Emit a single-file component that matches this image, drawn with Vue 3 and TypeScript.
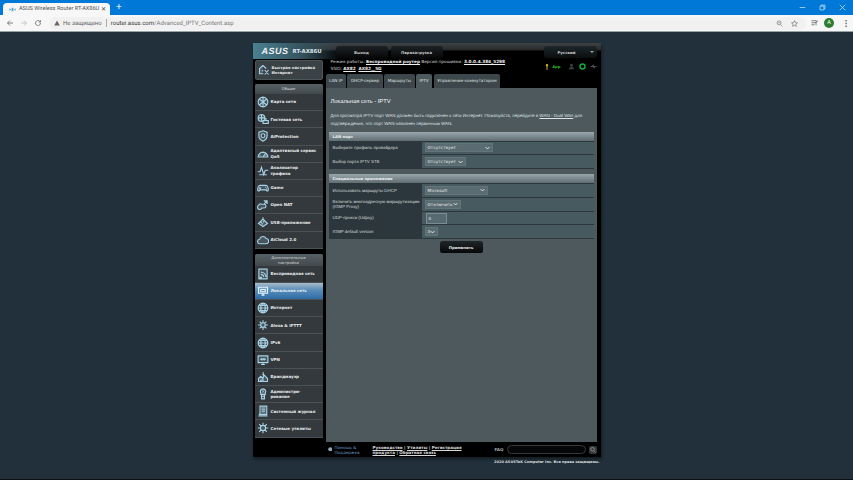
<script setup lang="ts">
interface MenuItem {
  label: string;
  icon: string;
  active?: boolean;
}

// icon paths are drawn on a 16x16 box
const globe = 'M8 1.500a6.500 6.500 0 1 0 0 13a6.500 6.500 0 1 0 0-13M1.500 8h13M8 1.500c-4 4-4 9 0 13M8 1.500c4 4 4 9 0 13M2.600 4.600h10.800M2.600 11.400h10.800';

const generalItems: MenuItem[] = [
  { label: 'Карта сети', icon: 'M8 1.500a6.500 6.500 0 1 0 0 13a6.500 6.500 0 1 0 0-13M3 4l10 8M13 4L3 12M8 1.500v13' },
  { label: 'Гостевая сеть', icon: 'M6 2a4.500 4.500 0 1 0 0 9a4.500 4.500 0 1 0 0-9M1.500 6.500h9M6 2v9M8 10h7v4H8zM10 8.500a2 2 0 0 1 3 0' },
  { label: 'AiProtection', icon: 'M8 1l5.500 2v5c0 3-2.500 5.500-5.500 7c-3-1.500-5.500-4-5.500-7V3zM8 5a2.500 2.500 0 1 0 0 5a2.500 2.500 0 1 0 0-5' },
  { label: 'Адаптивный сервис QoS', icon: 'M1.500 12a6.500 6.500 0 0 1 13 0zM8 12l3.500-5M3.500 9.500l1 .6M12.500 9.500l-1 .6M8 5.500v1.200' },
  { label: 'Анализатор\nтрафика', icon: 'M1 9h3l2-6l3 10l2-6h4M3 13h10' },
  { label: 'Game', icon: 'M4 4.500h8c2 0 3.500 4 3 6.500c-.4 1.500-2 1.500-3-.5H4c-1 2-2.600 2-3 .5c-.5-2.500 1-6.500 3-6.500zM4 7v2.500M2.800 8.200h2.400M11 7.200h.8M12.500 8.800h.8' },
  { label: 'Open NAT', icon: 'M2 8.500a3 3 0 1 0 4.500 3.500h3a2.500 2.500 0 0 0 0-5h-3a3 3 0 0 0-4.500 1.500zM9 2.500h4.500V6.500M13.500 2.500L9.500 6.500' },
  { label: 'USB-приложение', icon: 'M2 10l6-6l6 6l-6 4zM8 4V1.500M5 8l1.500 1.500M8 7l1.500 1.500M6.500 11l1.500-1' },
  { label: 'AiCloud 2.0', icon: 'M4 13a3 3 0 0 1-.5-6a4.500 4.500 0 0 1 8.500-1a3.500 3.500 0 0 1 0 7z' }
];

const advancedItems: MenuItem[] = [
  { label: 'Беспроводная сеть', icon: 'M2.500 1.500h11v13h-11zM5 12a1 1 0 1 0 .01 0M5 8.500a4 4 0 0 1 4 3.500M5 5.500a7 7 0 0 1 7 6.500' },
  { label: 'Локальная сеть', icon: 'M2 3h12v8H2zM6 13.500h4M8 11v2.500M5 6h6v3H5z', active: true },
  { label: 'Интернет', icon: globe },
  { label: 'Alexa & IFTTT', icon: 'M8 5a3 3 0 1 0 0 6a3 3 0 1 0 0-6M1.500 8h3M11.500 8h3M8 1.500v3M8 11.500v3M3.500 3.500l2.300 2.300M12.500 3.500l-2.300 2.300M3.500 12.500l2.300-2.300M12.500 12.500l-2.300-2.300' },
  { label: 'IPv6', icon: globe },
  { label: 'VPN', icon: 'M1.500 2.500h13v9h-13zM5.500 14h5M8 11.500V14M4 7h3M9 7h3M6 5.500L7.500 7L6 8.500M10 5.500L8.500 7L10 8.500' },
  { label: 'Брандмауэр', icon: 'M2 14v-4l3-3l3 3l1-5l5 5v4zM8 1.500c1 2 0 3-.5 4M5 14v-2h3v2' },
  { label: 'Администри-\nрование', icon: 'M5 6.500a3.500 3.500 0 1 1 6 0v2H5zM6 8.500v6h4v-6M6.500 11h3M8 3v3' },
  { label: 'Системный журнал', icon: 'M4 1.500h9v11H4zM6 4h5M6 6.500h5M6 9h5M2 14.500h12M2.500 12.500h2' },
  { label: 'Сетевые утилиты', icon: 'M8 4.500a3.500 3.500 0 1 0 0 7a3.500 3.500 0 1 0 0-7M8 1v3M8 12v3M1 8h3M12 8h3M3 3l2.500 2.500M13 3l-2.500 2.500M3 13l2.500-2.500M13 13l-2.500-2.500' }
];

interface Row {
  label: string;
  kind: 'select' | 'input';
  value: string;
  width?: number;
}

const lanRows: Row[] = [
  { label: 'Выберите профиль провайдера', kind: 'select', value: 'Отсутствует', width: 68 },
  { label: 'Выбор порта IPTV STB', kind: 'select', value: 'Отсутствует', width: 41 }
];

const specialRows: Row[] = [
  { label: 'Использовать маршруты DHCP', kind: 'select', value: 'Microsoft', width: 63 },
  { label: 'Включить многоадресную маршрутизацию (IGMP Proxy)', kind: 'select', value: 'Отключить', width: 36 },
  { label: 'UDP-прокси (Udpxy)', kind: 'input', value: '0' },
  { label: 'IGMP default version', kind: 'select', value: '3', width: 13 }
];

const tabs = ['LAN IP', 'DHCP-сервер', 'Маршруты', 'IPTV', 'Управление коммутатором'];
</script>

<template>
  <div class="page">
    <div class="tabbar">
      <div class="tab">
        <svg class="favicon" viewBox="0 0 16 16"><path d="M1 5l4 3l-4 3zM15 5l-4 3l4 3zM6 4h4v8H6z" fill="#4fa3c7" /></svg>
        <span class="tab-title">ASUS Wireless Router RT-AX86U</span>
        <span class="tab-close">✕</span>
      </div>
      <span class="new-tab">+</span>
      <div class="win-buttons">
        <svg viewBox="0 0 10 10"><path d="M1 5h8" /></svg>
        <svg viewBox="0 0 10 10"><path d="M1.500 3h5.500v5.500H1.500zM3 3V1.500h5.500V7H7" /></svg>
        <svg viewBox="0 0 10 10"><path d="M1 1l8 8M9 1l-8 8" /></svg>
      </div>
    </div>

    <div class="toolbar">
      <svg class="nav dark" viewBox="0 0 16 16"><path d="M14 8H3M8 3L3 8l5 5" /></svg>
      <svg class="nav light" viewBox="0 0 16 16"><path d="M2 8h11M8 3l5 5l-5 5" /></svg>
      <svg class="nav dark" viewBox="0 0 16 16"><path d="M13 8a5 5 0 1 1-1.500-3.500L13 6V2.500M13 6H9.500" /></svg>
      <div class="omnibox">
        <svg class="warn" viewBox="0 0 16 16"><path d="M8 1.500L15.500 14.500H.5z" /></svg>
        <span class="insecure">Не защищено</span>
        <span class="omni-sep"></span>
        <span class="url"><b>router.asus.com</b>/Advanced_IPTV_Content.asp</span>
        <span class="omni-spacer"></span>
        <svg class="omni-icon" viewBox="0 0 16 16"><path d="M7 2a4.500 4.500 0 1 0 0 9a4.500 4.500 0 1 0 0-9M10.500 10.500L14.500 14.500M5 6.500h4" /></svg>
        <svg class="omni-icon" viewBox="0 0 16 16"><path d="M8 1.500l2 4.500l4.800.5l-3.600 3.200l1 4.800L8 12l-4.200 2.500l1-4.800L1.200 6.500L6 6z" /></svg>
      </div>
      <svg class="nav dark queue" viewBox="0 0 16 16"><path d="M1 3.500h10M1 7.500h10M1 11.500h6M10 12.500V5.500l4-1.500" /></svg>
      <span class="avatar">A</span>
      <span class="dots">⋮</span>
    </div>

    <div class="content">
      <div class="router">
        <header class="router-head">
          <span class="logo">ASUS</span>
          <span class="model">RT-AX86U</span>
          <button class="head-btn">Выход</button>
          <button class="head-btn">Перезагрузка</button>
          <span class="head-spacer"></span>
          <button class="lang-btn">Русский<i class="lang-arrow"></i></button>
        </header>

        <div class="router-body">
          <aside class="sidebar">
            <div class="quick">
              <svg viewBox="0 0 16 16" class="menu-icon"><path d="M6.500 2L2 6v7h5M6.500 2L11 6M9 8l5 6M14 8l-5 6M5 9h2" /></svg>
              <span>Быстрая настройка<br />Интернет</span>
            </div>

            <div class="menu-group first">
              <div class="menu-title">Общие</div>
              <div v-for="item in generalItems" :key="item.label" class="menu-item">
                <svg viewBox="0 0 16 16" class="menu-icon"><path :d="item.icon" /></svg>
                <span>{{ item.label }}</span>
              </div>
            </div>

            <div class="menu-group">
              <div class="menu-title two-line">Дополнительные<br />настройки</div>
              <div
                v-for="item in advancedItems"
                :key="item.label"
                class="menu-item"
                :class="{ active: item.active }"
              >
                <svg viewBox="0 0 16 16" class="menu-icon"><path :d="item.icon" /></svg>
                <span>{{ item.label }}</span>
              </div>
            </div>
          </aside>

          <main class="main">
            <div class="status">
              <div class="status-text">
                <div>Режим работы: <u>Беспроводной роутер</u> Версия прошивки: <u>3.0.0.4.384_5298</u></div>
                <div>SSID: <u>AX82</u> &nbsp;<u>AX82__5G</u></div>
              </div>
              <div class="status-icons">
                <svg viewBox="0 0 8 14" class="key"><path d="M4 1a2.500 2.500 0 1 0 0 5a2.500 2.500 0 1 0 0-5M3 6h2v7H3z" /></svg>
                <span class="app">App</span>
                <svg viewBox="0 0 14 14" class="st-grey"><path d="M7 1.500a3 3 0 1 0 0 6a3 3 0 1 0 0-6M1.500 12.500c0-6 11-6 11 0z" /></svg>
                <svg viewBox="0 0 14 14" class="st-green"><path d="M7 2a5 5 0 1 0 0 10a5 5 0 1 0 0-10" /></svg>
                <svg viewBox="0 0 14 10" class="st-usb"><path d="M1 5h12M4 5l2-3h2M6 5l2 3h2" /></svg>
              </div>
            </div>

            <nav class="tabs">
              <span v-for="t in tabs" :key="t" class="page-tab" :class="{ current: t === 'IPTV' }">{{ t }}</span>
            </nav>

            <section class="panel">
              <h1>Локальная сеть - IPTV</h1>
              <p class="desc">
                Для просмотра IPTV порт WAN должен быть подключен к сети Интернет. Пожалуйста, перейдите в
                <u>WAN - Dual Wan</u> для<br />подтверждения, что порт WAN назначен первичным WAN.
              </p>

              <table class="form">
                <colgroup><col class="col-label" /><col /></colgroup>
                <thead><tr><th colspan="2">LAN порт</th></tr></thead>
                <tbody>
                  <tr v-for="row in lanRows" :key="row.label">
                    <td class="label">{{ row.label }}</td>
                    <td class="value">
                      <span class="select" :style="{ width: row.width + 'px' }">
                        {{ row.value }}
                        <svg viewBox="0 0 8 6"><path d="M1 1.500l3 3l3-3" /></svg>
                      </span>
                    </td>
                  </tr>
                </tbody>
              </table>

              <table class="form second">
                <colgroup><col class="col-label" /><col /></colgroup>
                <thead><tr><th colspan="2">Специальные приложения</th></tr></thead>
                <tbody>
                  <tr v-for="row in specialRows" :key="row.label">
                    <td class="label">{{ row.label }}</td>
                    <td class="value">
                      <span v-if="row.kind === 'select'" class="select" :style="{ width: row.width + 'px' }">
                        {{ row.value }}
                        <svg viewBox="0 0 8 6"><path d="M1 1.500l3 3l3-3" /></svg>
                      </span>
                      <span v-else class="text-input">{{ row.value }}</span>
                    </td>
                  </tr>
                </tbody>
              </table>

              <div class="apply-row"><button class="apply">Применить</button></div>
            </section>

            <footer class="router-foot">
              <svg class="help-icon" viewBox="0 0 10 10"><circle cx="5" cy="5" r="4.500" /></svg>
              <span class="help">Помощь &amp;<br />Поддержка</span>
              <span class="links"><u>Руководство</u> | <u>Утилиты</u> | <u>Регистрация<br />продукта</u> | <u>Обратная связь</u></span>
              <span class="faq">FAQ</span>
              <span class="search"></span>
              <svg class="search-btn" viewBox="0 0 16 16"><path d="M7 3a3.500 3.500 0 1 0 0 7a3.500 3.500 0 1 0 0-7M9.500 9.500L13 13" /></svg>
            </footer>
          </main>
        </div>
      </div>
      <div class="copyright">2020 ASUSTeK Computer Inc. Все права защищены.</div>
    </div>
  </div>
</template>

<style>
html,
body {
  margin: 0;
  background: #21303a;
  overflow: hidden;
}
</style>

<style scoped>
.page {
  width: 853px;
  height: 480px;
  display: flex;
  flex-direction: column;
  font-family: "DejaVu Sans", sans-serif;
  text-rendering: geometricPrecision;
  overflow: hidden;
  border-bottom: 1px solid #0c1114;
  box-sizing: border-box;
}

button {
  text-rendering: geometricPrecision;
}

/* browser chrome */
.tabbar {
  height: 15px;
  flex: none;
  background: #0078d7;
  display: flex;
  align-items: flex-end;
  padding-left: 3px;
}

.tab {
  width: 107px;
  height: 12px;
  background: #f7f7f7;
  border-radius: 4px 4px 0 0;
  display: flex;
  align-items: center;
  box-sizing: border-box;
  padding: 0 4px 0 6px;
}

.favicon {
  width: 7px;
  height: 7px;
  margin-right: 3px;
}

.tab-title {
  font: 5.600px Roboto, sans-serif;
  color: #555;
  width: 78px;
  white-space: nowrap;
}

.tab-close {
  font: 6px "DejaVu Sans", sans-serif;
  color: #444;
  margin-left: 4px;
}

.new-tab {
  color: #dcecf8;
  font: 10px/12px Roboto, sans-serif;
  margin-left: 6px;
  align-self: center;
}

.win-buttons {
  margin-left: auto;
  display: flex;
  gap: 13px;
  padding-right: 7px;
  align-self: center;
}

.win-buttons svg {
  width: 7px;
  height: 7px;
  fill: none;
  stroke: #d5e8f6;
  stroke-width: 1;
}

.toolbar {
  height: 16px;
  flex: none;
  background: #f7f7f7;
  display: flex;
  align-items: center;
  padding-left: 6px;
  border-bottom: 1px solid #9aa1a5;
}

.nav {
  width: 8px;
  height: 8px;
  fill: none;
  stroke-width: 1.600;
  margin-right: 6px;
}

.nav.dark {
  stroke: #666;
}

.nav.light {
  stroke: #bbb;
}

.omnibox {
  margin-left: 1px;
  width: 757px;
  height: 13px;
  border-radius: 7px;
  background: #f1f1f1;
  display: flex;
  align-items: center;
  padding: 0 8px 0 5px;
  box-sizing: border-box;
  font: 6px Roboto, sans-serif;
  color: #777;
}

.warn {
  width: 6px;
  height: 6px;
  fill: #666;
  margin-right: 3px;
}

.insecure {
  color: #666;
}

.omni-sep {
  width: 1px;
  height: 8px;
  background: #aaa;
  margin: 0 4px 0 4px;
}

.url b {
  font-weight: 400;
  color: #333;
}

.omni-spacer {
  flex: 1;
}

.omni-icon {
  width: 7px;
  height: 7px;
  fill: none;
  stroke: #666;
  stroke-width: 1.400;
  margin-left: 8px;
}

.queue {
  margin-left: 5px;
  margin-right: 3px;
}

.avatar {
  width: 10px;
  height: 10px;
  border-radius: 50%;
  background: #2e7d32;
  color: #fff;
  font: 5.500px/10px Roboto, sans-serif;
  text-align: center;
  margin-left: 2px;
}

.dots {
  color: #555;
  font: 700 8px Roboto, sans-serif;
  margin-left: 8px;
}

/* router page */
.content {
  flex: 1;
  padding-top: 11px;
}

.router {
  width: 348px;
  height: 414px;
  margin: 0 auto;
  background: #000;
  border-radius: 2px 2px 0 0;
  display: flex;
  flex-direction: column;
  box-shadow: 1px 2px 3px #141c21;
}

.router-head {
  height: 16px;
  flex: none;
  display: flex;
  align-items: center;
  padding-left: 9px;
  background:
    linear-gradient(90deg, #4a8090 0, #35535e 14%, rgba(20, 24, 26, 0) 26%),
    linear-gradient(#3f4244 0, #2a2c2d 40%, #000 52%);
  box-sizing: border-box;
}

.logo {
  width: 26px;
  font: italic 700 9px/16px "Liberation Sans", sans-serif;
  letter-spacing: 0.5px;
  color: #eef3f5;
}

.model {
  width: 43px;
  margin-left: 5px;
  margin-top: 1px;
  font: 700 5.400px "DejaVu Sans", sans-serif;
  color: #dbe3e6;
  white-space: nowrap;
}

.head-btn {
  height: 13px;
  width: 52px;
  margin-right: 3px;
  margin-top: 3px;
  border: 0;
  padding: 0;
  border-radius: 3px;
  background: linear-gradient(#1c2225, #050505);
  color: #c8c8c8;
  font: 700 3.900px "DejaVu Sans", sans-serif;
}

.head-spacer {
  flex: 1;
}

.lang-btn {
  position: relative;
  width: 53px;
  height: 12px;
  margin-right: 4px;
  margin-top: 2px;
  padding: 0 7px 0 0;
  border: 0;
  border-radius: 3px;
  background: linear-gradient(#1e272c, #0b0d0e);
  color: #ccc;
  font: 700 3.900px "DejaVu Sans", sans-serif;
}

.lang-arrow {
  position: absolute;
  right: 3px;
  top: 5px;
  border: 2px solid transparent;
  border-top: 2px solid #9aa;
}

.router-body {
  flex: 1;
  display: flex;
  min-height: 0;
}

.sidebar {
  width: 68px;
  margin-left: 2px;
  flex: none;
  padding-top: 1px;
  color: #e6e9ea;
}

.quick {
  height: 20px;
  box-sizing: border-box;
  background: #3a4246;
  border: 1px solid #4c5559;
  border-radius: 2px;
  display: flex;
  align-items: center;
  font: 700 3.900px/5.500px "DejaVu Sans", sans-serif;
}

.menu-group {
  margin-top: 5px;
  background: #33393c;
  border-radius: 2px 2px 0 0;
}

.menu-group.first {
  margin-top: 4px;
}

.menu-title {
  height: 10px;
  background: linear-gradient(#566165, #42494c);
  font: 3.800px/10px "DejaVu Sans", sans-serif;
  color: #d8dcdd;
  text-align: center;
  border-radius: 2px 2px 0 0;
}

.menu-title.two-line {
  height: 12px;
  line-height: 5px;
  padding-top: 1px;
  box-sizing: border-box;
}

.menu-item {
  height: 17.200px;
  box-sizing: border-box;
  display: flex;
  align-items: center;
  border-bottom: 1px solid #4b5256;
  font: 700 4px/5.500px "DejaVu Sans", sans-serif;
  color: #e8ecee;
}

.menu-item span {
  flex: 1;
  min-width: 0;
  white-space: pre-line;
}

.menu-item.active {
  background: linear-gradient(#a9bdcb 0, #5d8fb9 40%, #2d6ca6 100%);
  color: #e3edf5;
}

.menu-icon {
  width: 12px;
  height: 12px;
  flex: none;
  margin: 0 2px 0 2px;
  fill: #9fcbe0;
  fill-opacity: 0.2;
  stroke: #a8d2e6;
  stroke-width: 1.500;
}

.active .menu-icon {
  stroke: #e4f2fb;
}

.main {
  flex: 1;
  min-width: 0;
  display: flex;
  flex-direction: column;
  margin-left: 3px;
}

.status {
  height: 15px;
  flex: none;
  display: flex;
  color: #d4d8da;
  font: 4.250px/6.600px "DejaVu Sans", sans-serif;
  padding-left: 5px;
}

.status u {
  font-weight: 700;
  color: #eee;
}

.status-text {
  padding-top: 1px;
  white-space: nowrap;
}

.status-icons {
  margin-left: auto;
  margin-right: 4px;
  margin-top: 2px;
  display: flex;
  align-items: center;
  gap: 4px;
  height: 11px;
}

.status-icons svg {
  width: 7px;
  height: 7px;
}

.status-icons .key {
  width: 4px;
  height: 8px;
  fill: #c9ac2f;
  margin-right: -1px;
}

.app {
  color: #29b82e;
  font: 700 3.800px "DejaVu Sans", sans-serif;
  margin-right: 3px;
}

.st-grey {
  fill: #3b3f41;
}

.st-green {
  fill: none;
  stroke: #12a83c;
  stroke-width: 3;
}

.st-usb {
  fill: none;
  stroke: #5c6265;
  stroke-width: 1.600;
}

.tabs {
  height: 14px;
  flex: none;
  display: flex;
  gap: 1.500px;
}

.page-tab {
  padding: 0 3.500px;
  background: #3d474b;
  border-radius: 2px 2px 0 0;
  color: #dfe3e4;
  font: 4.180px/14px "DejaVu Sans", sans-serif;
  white-space: nowrap;
}

.page-tab.current {
  background: #4d595d;
}

.panel {
  flex: 1;
  min-height: 0;
  width: 271px;
  box-sizing: border-box;
  background: #4d595d;
  padding: 11px 3px 0;
  color: #f0f2f3;
}

.panel h1 {
  margin: 0 0 0 2px;
  font: 400 5.800px/7px "Liberation Sans", sans-serif;
  color: #f5f6f6;
}

.desc {
  margin: 6px 0 0 2px;
  font: 4.500px/8px "Liberation Sans", sans-serif;
  color: #dfe2e3;
  white-space: nowrap;
}

.form {
  width: 265px;
  margin-top: 3.500px;
  border-collapse: collapse;
  table-layout: fixed;
}

.form.second {
  margin-top: 5px;
}

.col-label {
  width: 93px;
}

.form th {
  height: 9px;
  padding: 0 0 0 4px;
  text-align: left;
  background: linear-gradient(#9aa7ac, #5f6d73);
  font: 700 3.900px "DejaVu Sans", sans-serif;
  color: #eef1f2;
}

.form td {
  height: 13.800px;
  padding: 0;
  border: 1px solid #2d373b;
  border-width: 1px 0;
  box-sizing: border-box;
}

.form .label {
  background: #2b373d;
  padding: 0 1px 0 4px;
  font: 4.400px/5.300px "Liberation Sans", sans-serif;
  color: #d6dadb;
}

.form .value {
  background: #475a5f;
  padding-left: 3px;
}

.select {
  height: 9px;
  box-sizing: border-box;
  display: flex;
  align-items: center;
  justify-content: space-between;
  padding: 0 2px 0 2px;
  background: #5a6c72;
  border: 1px solid #62757b;
  font: 4px "DejaVu Sans", sans-serif;
  letter-spacing: 0.2px;
  color: #f2f4f4;
  white-space: nowrap;
}

.select svg {
  width: 5px;
  height: 4px;
  flex: none;
  fill: none;
  stroke: #f2f4f4;
  stroke-width: 1.400;
}

.text-input {
  display: block;
  margin-left: 1px;
  width: 21px;
  height: 11px;
  box-sizing: border-box;
  padding-left: 2px;
  background: #576a71;
  border: 1px solid #7a8c93;
  font: 4px/9px "DejaVu Sans", sans-serif;
  color: #f2f4f4;
}

.apply-row {
  margin-top: 2px;
  padding-left: 111px;
}

.apply {
  display: block;
  width: 43px;
  height: 12px;
  padding: 0;
  border: 0;
  border-radius: 2.500px;
  background: linear-gradient(#1f2529, #060708);
  color: #e8e8e8;
  font: 700 3.900px "DejaVu Sans", sans-serif;
}

.router-foot {
  height: 15px;
  flex: none;
  display: flex;
  align-items: center;
  color: #d8d8d8;
  font: 4.100px/5px "DejaVu Sans", sans-serif;
}

.help-icon {
  width: 4.500px;
  height: 4.500px;
  margin-left: 2px;
  flex: none;
  fill: #8fa8b8;
}

.help {
  width: 38px;
  margin-left: 2.500px;
  flex: none;
  color: #6e9bc9;
}

.links {
  width: 122px;
  flex: none;
  font-weight: 700;
  white-space: nowrap;
}

.faq {
  font-weight: 700;
  color: #a9aeb0;
  width: 12px;
  flex: none;
}

.search {
  width: 79px;
  height: 9px;
  flex: none;
  box-sizing: border-box;
  border: 1px solid #33393c;
  border-radius: 5px;
  background: #060708;
}

.search-btn {
  width: 8px;
  height: 8px;
  flex: none;
  margin-left: 3px;
  border-radius: 2px;
  background: #34393b;
  fill: none;
  stroke: #8b9194;
  stroke-width: 1.800;
}

.copyright {
  width: 346px;
  margin: 3px auto 0;
  text-align: right;
  font: 700 3.560px "DejaVu Sans", sans-serif;
  color: #d6dbde;
}
</style>
